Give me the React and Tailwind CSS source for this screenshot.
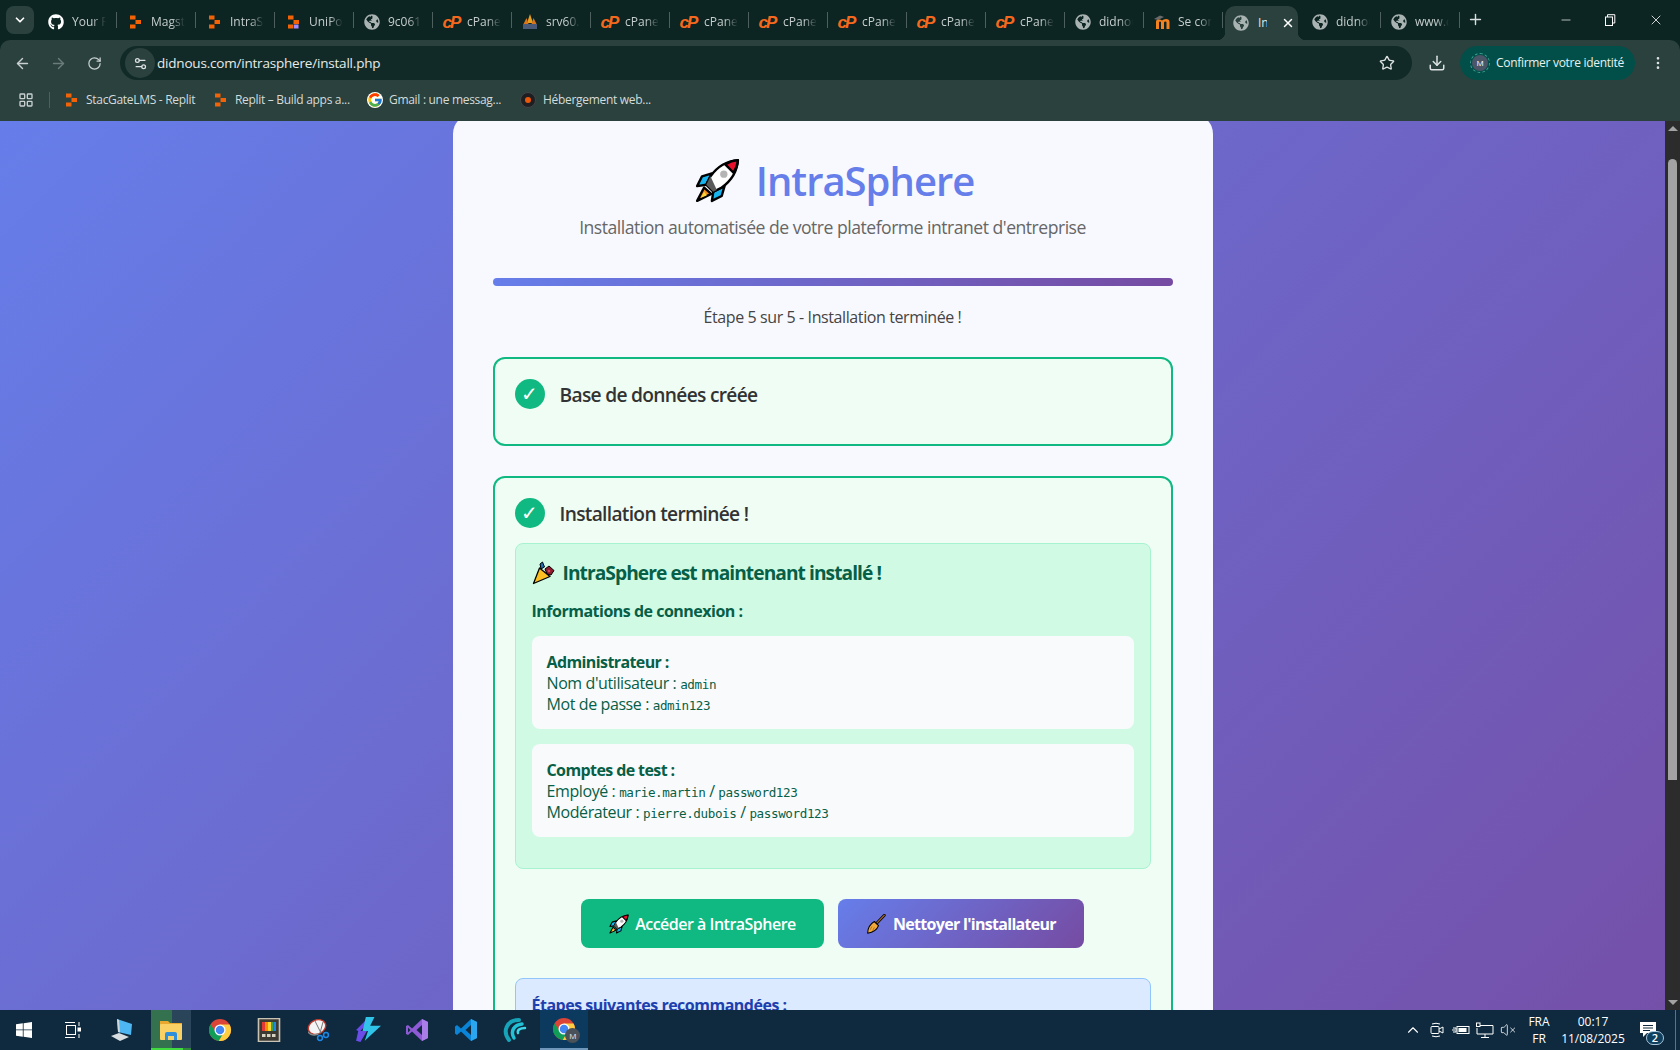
import { ArrowLeft, ArrowRight, RotateCw, Star, Download, MoreVertical, Plus, X, Minus, ChevronDown, ChevronUp, LayoutGrid, Settings2, VolumeX } from "lucide-react";
import { FaGithub, FaGlobeAmericas } from "react-icons/fa";
import { FcGoogle } from "react-icons/fc";

const tabs = [
  { icon: "github", label: "Your Repositories" },
  { icon: "replit", label: "Magstrip" },
  { icon: "replit", label: "IntraSphere" },
  { icon: "unipo", label: "UniPoint" },
  { icon: "globe", label: "9c061f" },
  { icon: "cpanel", label: "cPanel" },
  { icon: "srv", label: "srv60.com" },
  { icon: "cpanel", label: "cPanel" },
  { icon: "cpanel", label: "cPanel" },
  { icon: "cpanel", label: "cPanel" },
  { icon: "cpanel", label: "cPanel" },
  { icon: "cpanel", label: "cPanel" },
  { icon: "cpanel", label: "cPanel" },
  { icon: "globe", label: "didnous" },
  { icon: "moodle", label: "Se connecter" },
  { icon: "globe", label: "IntraSphere", active: true },
  { icon: "globe", label: "didnous" },
  { icon: "globe", label: "www.didnous" },
];

function ReplitIcon({ dot }) {
  return (
    <svg viewBox="0 0 16 16" className="w-4 h-4">
      <rect x="3" y="1.5" width="5.5" height="4" fill="#f26207" />
      <rect x="8.5" y="6" width="5.5" height="4" fill="#f26207" />
      <rect x="3" y="10.5" width="5.5" height="4" fill="#f26207" />
      {dot && <rect x="9" y="10.5" width="4.5" height="4" fill="#a78bfa" />}
    </svg>
  );
}

function Favicon({ kind }) {
  if (kind === "github") return <FaGithub className="w-4 h-4 text-white" />;
  if (kind === "replit") return <ReplitIcon />;
  if (kind === "unipo") return <ReplitIcon dot />;
  if (kind === "globe") return <FaGlobeAmericas className="w-4 h-4 text-[#a9b3b1]" />;
  if (kind === "cpanel")
    return <span className="w-4 h-4 flex items-center justify-center font-['Liberation_Sans',sans-serif] font-bold italic text-[17px] leading-none tracking-[-2px] text-[#f4691e]">cP</span>;
  if (kind === "srv")
    return (
      <svg viewBox="0 0 16 16" className="w-4 h-4">
        <path d="M8 0 L11 9 H5Z" fill="#e9a020" />
        <path d="M4.5 4 L6.5 10 H1.5Z" fill="#d9761a" />
        <path d="M11.5 4 L14.5 10 H9.5Z" fill="#d9761a" />
        <rect x="1" y="10" width="14" height="5" fill="#4a5a78" />
      </svg>
    );
  if (kind === "moodle")
    return (
      <svg viewBox="0 0 16 16" className="w-4 h-4">
        <path d="M0 5 L6 1.5 L10 3 L4 6Z" fill="#6b6b6b" />
        <path d="M2 15 V7.5 Q2 5.5 5 5.5 Q7 5.5 8 6.5 Q9.5 5 12 5 Q15.5 5 15.5 8 V15 H12.5 V8.5 Q12.5 7.5 11.5 7.5 Q10 7.5 10 8.5 V15 H7 V8.5 Q7 7.5 6 7.5 Q5 7.5 5 8.5 V15Z" fill="#f58220" />
      </svg>
    );
  return null;
}

function Tab({ tab }) {
  if (tab.active) {
    return (
      <div className="relative w-[73px] mr-[6px] h-[34px] mt-[6px] pb-[1px] bg-[#2a413e] rounded-t-[10px] flex items-center pl-[8px] shrink-0">
        <div className="absolute -left-[8px] bottom-0 w-2 h-2 bg-[radial-gradient(circle_at_0_0,transparent_8px,#2a413e_8.5px)]" />
        <div className="absolute -right-[8px] bottom-0 w-2 h-2 bg-[radial-gradient(circle_at_100%_0,transparent_8px,#2a413e_8.5px)]" />
        <Favicon kind={tab.icon} />
        <span className="ml-[9px] w-[9px] overflow-hidden whitespace-nowrap text-[12px] text-[#dfe5e4]">{tab.label}</span>
        <X className="ml-[14px] w-[14px] h-[14px] text-white" strokeWidth={2.5} />
      </div>
    );
  }
  return (
    <div className="relative w-[79px] h-[34px] mt-[6px] pb-[2px] flex items-center pl-[8px] shrink-0">
      <Favicon kind={tab.icon} />
      <span className="ml-[8px] w-[34px] overflow-hidden whitespace-nowrap text-[12px] text-[#c6cfcd] [mask-image:linear-gradient(to_right,black_60%,transparent)]">{tab.label}</span>
      <span className="absolute left-[76px] top-[6px] h-[16px] w-px bg-[#4d605d]" />
    </div>
  );
}

function ChromeLogo({ className }) {
  return (
    <svg viewBox="0 0 48 48" className={className}>
      <circle cx="24" cy="24" r="22" fill="#db4437" />
      <path d="M4.95 13 A22 22 0 0 0 21.5 45.9 L31 30 L17 30Z" fill="#0f9d58" />
      <path d="M43.05 13 H24 L31 30 L21.5 45.9 A22 22 0 0 0 43.05 13Z" fill="#ffcd40" />
      <circle cx="24" cy="24" r="11" fill="#fff" />
      <circle cx="24" cy="24" r="8.5" fill="#4285f4" />
    </svg>
  );
}

function RocketEmoji({ className }) {
  return (
    <svg viewBox="0 0 32 32" className={className}>
      <g stroke="#000" strokeWidth="1.7" strokeLinejoin="round">
        <path d="M12 11 L5 13 L1.5 20 L8 19Z" fill="#18b4f0" />
        <path d="M21 20 L19 27 L12 30.5 L13 24Z" fill="#18b4f0" />
        <path d="M6.5 21 L1.5 30.5 L11.5 25.5Z" fill="#f58a1f" />
        <path d="M30.5 1.5 C23 2 16 6 11 13 L8 19 L13 24 L19 21 C26 16 30 9 30.5 1.5Z" fill="#fff" />
        <path d="M30.5 1.5 C27 1.8 24 3 21.5 4.6 L27.4 10.5 C29 8 30.3 5 30.5 1.5Z" fill="#e8112d" />
      </g>
      <path d="M11 13 L8 19 L13 24 L15.5 22.8Z" fill="#5a5a5a" />
      <path d="M6.5 24 L4 28.5 L8.5 26.5Z" fill="#ffd23f" />
      <circle cx="20.5" cy="11.5" r="2.6" fill="#b5b5b5" />
    </svg>
  );
}

function PartyEmoji({ className }) {
  return (
    <svg viewBox="0 0 24 24" className={className}>
      <path d="M1.5 22.5 L7.5 7 L18 15.5Z" fill="#fbbf24" stroke="#000" strokeWidth="1.3" strokeLinejoin="round" />
      <path d="M8 3 L10.5 1 L12.5 6 L9 8Z" fill="#1f6fb5" stroke="#000" strokeWidth="1" />
      <path d="M13 8 L17 5 L22 9.5 L19 14 L15 13Z" fill="#8e1b2e" stroke="#000" strokeWidth="1" />
      <circle cx="17" cy="10" r="1.3" fill="#d94a5a" />
    </svg>
  );
}

function BroomEmoji({ className }) {
  return (
    <svg viewBox="0 0 24 24" className={className}>
      <path d="M22 1.5 L12 12" stroke="#000" strokeWidth="3.2" strokeLinecap="round" />
      <path d="M22 1.5 L12 12" stroke="#a0622a" strokeWidth="1.4" strokeLinecap="round" />
      <path d="M10 9 L15 14 C13.5 18 9 22 2 23 C2 17 5 12 10 9Z" fill="#f0a93a" stroke="#000" strokeWidth="1.3" strokeLinejoin="round" />
      <path d="M7 15 L5 19 M10 16 L8 20" stroke="#a86a16" strokeWidth="1" />
    </svg>
  );
}

function CheckBadge() {
  return (
    <div className="w-[30px] h-[30px] rounded-full bg-[#10b981] flex items-center justify-center shrink-0 text-white font-['DejaVu_Sans',sans-serif] font-bold text-[20px] leading-none">
      ✓
    </div>
  );
}

function Code({ children }) {
  return <code className="font-['DejaVu_Sans_Mono',monospace] text-[12.6px] leading-none">{children}</code>;
}

function TaskCell({ children }) {
  return <div className="w-[49.2px] h-full flex items-center justify-center shrink-0">{children}</div>;
}

export default function App() {
  return (
    <div className="w-[1680px] h-[1050px] flex flex-col overflow-hidden font-['Open_Sans',sans-serif] bg-[#0c2422]">
      {/* tab strip */}
      <div className="h-[40px] flex shrink-0 bg-[#0c2422] text-[#c6cfcd]">
        <div className="w-[40px] shrink-0 pt-[6px] pl-[6px]">
          <div className="w-[28px] h-[28px] rounded-[8px] bg-[#2a413e] flex items-center justify-center">
            <ChevronDown className="w-[14px] h-[14px] text-white" strokeWidth={3} />
          </div>
        </div>
        {tabs.map((t, i) => (
          <Tab key={i} tab={t} />
        ))}
        <div className="w-[28px] h-[40px] flex items-center justify-center -ml-[1px] pb-[1px]">
          <Plus className="w-[17px] h-[17px] text-[#d8dfde]" strokeWidth={2} />
        </div>
        <div className="ml-auto flex h-[40px] text-white">
          <div className="w-[46px] flex items-center justify-center"><Minus className="w-[14px] h-[14px]" strokeWidth={1.2} /></div>
          <div className="w-[42px] flex items-center justify-center">
            <svg viewBox="0 0 12 12" className="w-[12px] h-[12px]" fill="none" stroke="#fff" strokeWidth="1">
              <rect x="1.5" y="3" width="7" height="8.5" />
              <path d="M3.5 3 V0.7 H10.8 V9 H8.5" />
            </svg>
          </div>
          <div className="w-[49px] flex items-center justify-center"><X className="w-[16px] h-[16px]" strokeWidth={1.2} /></div>
        </div>
      </div>

      {/* toolbar */}
      <div className="h-[81px] shrink-0 bg-[#2a413e] rounded-t-[10px] flex flex-col">
        <div className="h-[40px] pt-[6px] flex">
          <div className="w-[120px] pl-[4px] flex items-center">
            <div className="w-[36px] flex justify-center"><ArrowLeft className="w-[17px] h-[17px] text-[#c9d1d0]" /></div>
            <div className="w-[36px] flex justify-center"><ArrowRight className="w-[17px] h-[17px] text-[#6b7c79]" /></div>
            <div className="w-[36px] flex justify-center"><RotateCw className="w-[15px] h-[15px] text-[#c9d1d0]" /></div>
          </div>
          <div className="w-[1292px] h-[34px] rounded-full bg-[#122a27] flex items-center pl-[5px]">
            <div className="w-[30px] h-[30px] rounded-full bg-[#2a413e] flex items-center justify-center">
              <Settings2 className="w-[15px] h-[15px] text-[#dce3e2]" />
            </div>
            <span className="ml-[2px] text-[13.5px] tracking-[-0.2px] text-[#e6ecea]">didnous.com/intrasphere/install.php</span>
            <Star className="ml-auto mr-[17px] w-[16px] h-[16px] text-[#dce3e2]" strokeWidth={2} />
          </div>
          <div className="w-[48px] flex items-center justify-center pl-[2px]">
            <Download className="w-[18px] h-[18px] text-[#dce3e2]" />
          </div>
          <div className="w-[175px] h-[34px] rounded-full bg-[#024f49] flex items-center pl-[10px]">
            <div className="w-[20px] h-[20px] rounded-full border border-dashed border-[#3fa597] p-[1px] shrink-0">
              <div className="w-full h-full rounded-full bg-[#4a5568] text-white text-[8px] flex items-center justify-center">M</div>
            </div>
            <span className="ml-[6px] whitespace-nowrap text-[12px] tracking-[-0.3px] text-[#e6f2f0]">Confirmer votre identité</span>
          </div>
          <div className="flex-1 flex items-center justify-center">
            <MoreVertical className="w-[16px] h-[16px] text-[#dce3e2]" />
          </div>
        </div>
        {/* bookmarks */}
        <div className="flex-1 pb-[1px] flex items-center text-[12px] tracking-[-0.3px] text-[#d4dcda]">
          <LayoutGrid className="ml-[18px] w-[16px] h-[16px] text-[#c9d1d0]" />
          <div className="ml-[15px] w-px h-[16px] bg-[#4d605d]" />
          <div className="ml-[13px] w-[149px] flex items-center gap-[7px]"><ReplitIcon /><span className="whitespace-nowrap">StacGateLMS - Replit</span></div>
          <div className="w-[155px] flex items-center gap-[7px]"><ReplitIcon /><span className="whitespace-nowrap">Replit – Build apps a...</span></div>
          <div className="w-[153px] flex items-center gap-[6px]"><FcGoogle className="w-4 h-4 bg-white rounded-full" /><span className="whitespace-nowrap">Gmail : une messag...</span></div>
          <div className="flex items-center gap-[7px]">
            <div className="w-4 h-4 rounded-full bg-[#1d1f22] border border-[#444] flex items-center justify-center"><div className="w-[6px] h-[6px] rounded-full bg-[#ea580c]" /></div>
            <span className="whitespace-nowrap">Hébergement web...</span>
          </div>
        </div>
      </div>

      {/* viewport */}
      <div className="flex-1 min-h-0 flex">
        <div className="flex-1 min-w-0 overflow-hidden">
          <div className="h-[1208px] -mt-[27px] pt-[20px] bg-[linear-gradient(135deg,#667eea_0%,#764ba2_100%)]">
            <div className="w-[760px] mx-auto rounded-[20px] bg-[#f8f9fe] p-[40px]">
              <div className="flex items-center justify-center h-[53px] gap-[16px] pl-[4px]">
                <RocketEmoji className="w-[45px] h-[45px]" />
                <h1 className="text-[40px] leading-[53px] font-semibold tracking-[-1px] text-[#667eea]">IntraSphere</h1>
              </div>
              <p className="mt-[9px] text-center text-[17.6px] leading-[23px] tracking-[-0.5px] text-[#666666]">Installation automatisée de votre plateforme intranet d'entreprise</p>

              <div className="mt-[39px] h-[8px] rounded-[4px] bg-[linear-gradient(90deg,#667eea,#764ba2)]" />
              <p className="mt-[21px] text-center text-[16px] leading-[21px] tracking-[-0.4px] text-[#444444]">Étape 5 sur 5 - Installation terminée !</p>

              <section className="mt-[29px] h-[89px] rounded-[12px] border-2 border-[#10b981] bg-[#f0fdf4] p-[20px]">
                <div className="flex items-center gap-[15px]">
                  <CheckBadge />
                  <h3 className="pt-[2px] text-[19.2px] leading-[26px] font-semibold tracking-[-0.7px] text-[#333333]">Base de données créée</h3>
                </div>
              </section>

              <section className="mt-[30px] rounded-[12px] border-2 border-[#10b981] bg-[#f0fdf4] p-[20px]">
                <div className="flex items-center gap-[15px]">
                  <CheckBadge />
                  <h3 className="pt-[2px] text-[19.2px] leading-[26px] font-semibold tracking-[-0.7px] text-[#333333]">Installation terminée !</h3>
                </div>

                <div className="mt-[15px] rounded-[8px] border border-[#a7f3d0] bg-[#d1fae5] p-[16px] text-[#065f46]">
                  <h4 className="flex items-center text-[19.2px] leading-[26px] font-bold tracking-[-0.95px]">
                    <PartyEmoji className="w-[24px] h-[24px] mr-[7px]" />
                    IntraSphere est maintenant installé !
                  </h4>
                  <p className="mt-[15px] text-[16px] leading-[21px] font-bold tracking-[-0.5px]">Informations de connexion :</p>

                  <div className="mt-[14px] rounded-[8px] bg-[#f9fafc] px-[15px] pt-[16px] pb-[14px] text-[16px] leading-[21px] tracking-[-0.4px]">
                    <p className="font-bold tracking-[-0.6px]">Administrateur :</p>
                    <p>Nom d'utilisateur : <Code>admin</Code></p>
                    <p>Mot de passe : <Code>admin123</Code></p>
                  </div>
                  <div className="mt-[15px] rounded-[8px] bg-[#f9fafc] px-[15px] pt-[16px] pb-[14px] text-[16px] leading-[21px] tracking-[-0.4px]">
                    <p className="font-bold tracking-[-0.6px]">Comptes de test :</p>
                    <p>Employé : <Code>marie.martin</Code> / <Code>password123</Code></p>
                    <p>Modérateur : <Code>pierre.dubois</Code> / <Code>password123</Code></p>
                  </div>
                  <div className="h-[15px]" />
                </div>

                <div className="mt-[30px] flex justify-center gap-[14px]">
                  <button className="w-[243px] h-[49px] rounded-[8px] bg-[#10b981] text-white text-[16px] font-semibold tracking-[-0.5px] flex items-center justify-center gap-[6px]">
                    <RocketEmoji className="w-[20px] h-[20px]" />
                    Accéder à IntraSphere
                  </button>
                  <button className="w-[246px] h-[49px] rounded-[8px] bg-[linear-gradient(135deg,#667eea,#764ba2)] text-white text-[16px] font-bold tracking-[-0.7px] flex items-center justify-center gap-[7px]">
                    <BroomEmoji className="w-[20px] h-[20px]" />
                    Nettoyer l'installateur
                  </button>
                </div>

                <div className="mt-[30px] rounded-[8px] border border-[#93c5fd] bg-[#dbeafe] p-[16px] text-[#1e40af]">
                  <p className="text-[16px] leading-[21px] font-bold tracking-[-0.5px]">Étapes suivantes recommandées :</p>
                </div>
              </section>
            </div>
          </div>
        </div>
        {/* scrollbar */}
        <div className="w-[15px] bg-[#2c2c2c] flex flex-col items-center shrink-0">
          <div className="mt-[5px] w-0 h-0 border-x-[5px] border-x-transparent border-b-[5px] border-b-[#a3a3a3]" />
          <div className="mt-[28px] w-[9px] h-[621px] rounded-t-full bg-[#a3a3a3]" />
          <div className="mt-auto mb-[5px] w-0 h-0 border-x-[5px] border-x-transparent border-t-[5px] border-t-[#a3a3a3]" />
        </div>
      </div>

      {/* taskbar */}
      <div className="h-[40px] shrink-0 bg-[#0f2a3f] flex items-center text-white text-[12px]">
        <div className="w-[48px] h-full flex items-center justify-center shrink-0">
          <svg viewBox="0 0 16 16" className="w-[16px] h-[16px]" fill="#fff">
            <path d="M0 2.3 L6.8 1.3 V7.5 H0Z M7.6 1.2 L16 0 V7.5 H7.6Z M0 8.3 H6.8 V14.7 L0 13.7Z M7.6 8.3 H16 V16 L7.6 14.8Z" />
          </svg>
        </div>
        <TaskCell>
          <svg viewBox="0 0 16 16" className="w-[16px] h-[16px]" fill="none" stroke="#fff" strokeWidth="1">
            <path d="M0 0.5 H10 M0 15.5 H10 M14 0 V4 M14 12 V16" />
            <rect x="1.5" y="3.5" width="9" height="9" />
            <rect x="13" y="6" width="3" height="3" fill="#fff" />
          </svg>
        </TaskCell>
        <TaskCell>
          <svg viewBox="0 0 24 24" className="w-[24px] h-[24px]">
            <path d="M7 1 L22 6 L21 17 L8 14Z" fill="#4fb6f4" />
            <path d="M7 1 L8 14 L10 14.5 L9 2Z" fill="#cfd8dc" />
            <path d="M1 18 L9 15 L19 19 L10 23Z" fill="#d7dde0" />
          </svg>
        </TaskCell>
        <TaskCell>
          <div className="relative w-[40px] h-full flex items-center justify-center bg-[linear-gradient(90deg,#33714f_52%,#2a455a_52%)]">
            <svg viewBox="0 0 24 24" className="w-[24px] h-[24px]">
              <path d="M1 3 H9 L11 5 H23 V9 H1Z" fill="#e8a92e" />
              <rect x="1" y="6" width="22" height="16" rx="1" fill="#fad165" />
              <path d="M6 22 V16 Q6 14 8 14 H16 Q18 14 18 16 V22 H15 V18 H9 V22Z" fill="#2f8fdb" />
            </svg>
            <div className="absolute inset-x-0 bottom-0 h-[2px] bg-[linear-gradient(90deg,#3fdb3f_80%,#2f8a3a_80%)]" />
          </div>
        </TaskCell>
        <TaskCell><ChromeLogo className="w-[24px] h-[24px]" /></TaskCell>
        <TaskCell>
          <svg viewBox="0 0 24 24" className="w-[24px] h-[24px]">
            <rect x="1.5" y="0.5" width="21" height="23" fill="#3d3a33" stroke="#c9c3b4" strokeWidth="1.6" />
            <rect x="5" y="4" width="3" height="9" fill="#e53935" />
            <rect x="8" y="4" width="3" height="9" fill="#fb8c00" />
            <rect x="11" y="4" width="3" height="9" fill="#fdd835" />
            <rect x="14" y="4" width="2.5" height="9" fill="#43a047" />
            <rect x="16.5" y="4" width="2.5" height="9" fill="#1e88e5" />
            <rect x="5" y="16" width="3.5" height="3" fill="#d8d2c2" />
            <rect x="10" y="16" width="3.5" height="3" fill="#d8d2c2" />
            <rect x="15" y="16" width="3.5" height="3" fill="#d8d2c2" />
          </svg>
        </TaskCell>
        <TaskCell>
          <svg viewBox="0 0 24 24" className="w-[24px] h-[24px]">
            <ellipse cx="10" cy="9" rx="9" ry="7" fill="#f5f5f5" stroke="#c0392b" strokeWidth="1.4" transform="rotate(-25 10 9)" />
            <path d="M1 13 Q4 18 12 15 L11 17 Q4 19 1 15Z" fill="#8a8a8a" />
            <path d="M8 3 L14 15 M16 4 L13 15" stroke="#777" strokeWidth="1" />
            <circle cx="13" cy="20" r="2.4" fill="none" stroke="#1e88e5" strokeWidth="1.5" />
            <circle cx="19" cy="17" r="2.4" fill="none" stroke="#1e88e5" strokeWidth="1.5" />
          </svg>
        </TaskCell>
        <TaskCell>
          <svg viewBox="0 0 24 24" className="w-[26px] h-[26px]">
            <path d="M9 4 H13 L5 13 H11 L5 23 L1 22 L3 13 L1 12Z" fill="#6a4de8" />
            <path d="M10 0 H18 L14 8 H24 L9 22 L12 13 H7Z" fill="#2fc4e8" />
          </svg>
        </TaskCell>
        <TaskCell>
          <svg viewBox="0 0 24 24" className="w-[24px] h-[24px]">
            <path d="M17 1 L23 4 V20 L17 23 L7 13.5 L3 17 L1 16 V8 L3 7 L7 10.5Z M17 7 L11.5 12 L17 17Z M3 9.5 V14.5 L5.5 12Z" fill="#8e5ad6" fillRule="evenodd" />
            <path d="M17 1 L23 4 V20 L17 23Z" fill="#a97de8" />
          </svg>
        </TaskCell>
        <TaskCell>
          <svg viewBox="0 0 24 24" className="w-[24px] h-[24px]">
            <path d="M17 1 L23 4 V20 L17 23 L7 13.5 L3 17 L1 15.5 V8.5 L3 7 L7 10.5Z M17 7 L11.5 12 L17 17Z" fill="#0a84d6" fillRule="evenodd" />
            <path d="M17 1 L23 4 V20 L17 23Z" fill="#2ba5ee" />
          </svg>
        </TaskCell>
        <TaskCell>
          <svg viewBox="0 0 24 24" className="w-[24px] h-[24px]" fill="none" strokeLinecap="round">
            <path d="M6 22 C-1 13 4 2 16 2" stroke="#17a3b8" strokeWidth="4" />
            <path d="M11 20 C7 13 11 7 19 6" stroke="#22c1d6" strokeWidth="3.5" />
            <path d="M15 15 C14 12 17 10 22 10" stroke="#3dd5e8" strokeWidth="2.5" />
          </svg>
        </TaskCell>
        <TaskCell>
          <div className="relative w-[48px] h-full flex items-center justify-center bg-[#0c3a5e] border-b-2 border-[#6e97bb]">
            <ChromeLogo className="w-[24px] h-[24px]" />
            <div className="absolute left-[25px] top-[18px] w-[15px] h-[15px] rounded-full bg-[#4a5159] text-[#e2e8f0] text-[8px] flex items-center justify-center">M</div>
          </div>
        </TaskCell>

        <div className="ml-auto flex h-full items-center">
          <div className="w-[24px] flex justify-center"><ChevronUp className="w-[18px] h-[18px]" strokeWidth={1.5} /></div>
          <div className="w-[24px] flex justify-center">
            <svg viewBox="0 0 16 16" className="w-[16px] h-[16px]" fill="none" stroke="#fff" strokeWidth="1">
              <rect x="2" y="4.5" width="8" height="7" rx="1" />
              <path d="M10 7 L14 5 V11 L10 9" />
              <path d="M3 2 Q7 0.5 11 2 M3 14 Q7 15.5 11 14" />
            </svg>
          </div>
          <div className="w-[24px] flex justify-center">
            <svg viewBox="0 0 18 16" className="w-[18px] h-[16px]" fill="none" stroke="#fff" strokeWidth="1">
              <path d="M0 8 H3 M1 6 H4 V10 H1" />
              <rect x="5" y="4.5" width="12" height="7" />
              <rect x="6.5" y="6" width="8" height="4" fill="#fff" stroke="none" />
            </svg>
          </div>
          <div className="w-[24px] flex justify-center">
            <svg viewBox="0 0 18 16" className="w-[18px] h-[16px]" fill="none" stroke="#fff" strokeWidth="1">
              <path d="M4 3.5 H17 V12 H1 V6" />
              <rect x="0.5" y="1" width="3.5" height="3.5" />
              <path d="M9 12 V15 M5 15.5 H13" />
            </svg>
          </div>
          <div className="w-[22px] flex justify-center"><VolumeX className="w-[16px] h-[16px]" strokeWidth={1.2} /></div>
          <div className="w-[40px] flex flex-col items-center leading-[17px]"><span>FRA</span><span>FR</span></div>
          <div className="w-[68px] flex flex-col items-center leading-[17px]"><span>00:17</span><span>11/08/2025</span></div>
          <div className="relative w-[48px] h-full">
            <svg viewBox="0 0 16 16" className="absolute left-[13px] top-[12px] w-[16px] h-[16px]" fill="#fff">
              <path d="M0 0 H16 V11 H7 L3 15 V11 H0Z" />
              <path d="M3 3.5 H13 M3 6 H13 M3 8.5 H10" stroke="#0f2a3f" strokeWidth="1" />
            </svg>
            <div className="absolute left-[19px] top-[21px] w-[18px] h-[14px] rounded-full bg-[#0f3f5f] border border-[#a9c7dd] text-[11px] font-semibold flex items-center justify-center">2</div>
          </div>
          <div className="w-px h-full bg-[#5f7283] mr-[4px]" />
        </div>
      </div>
    </div>
  );
}
